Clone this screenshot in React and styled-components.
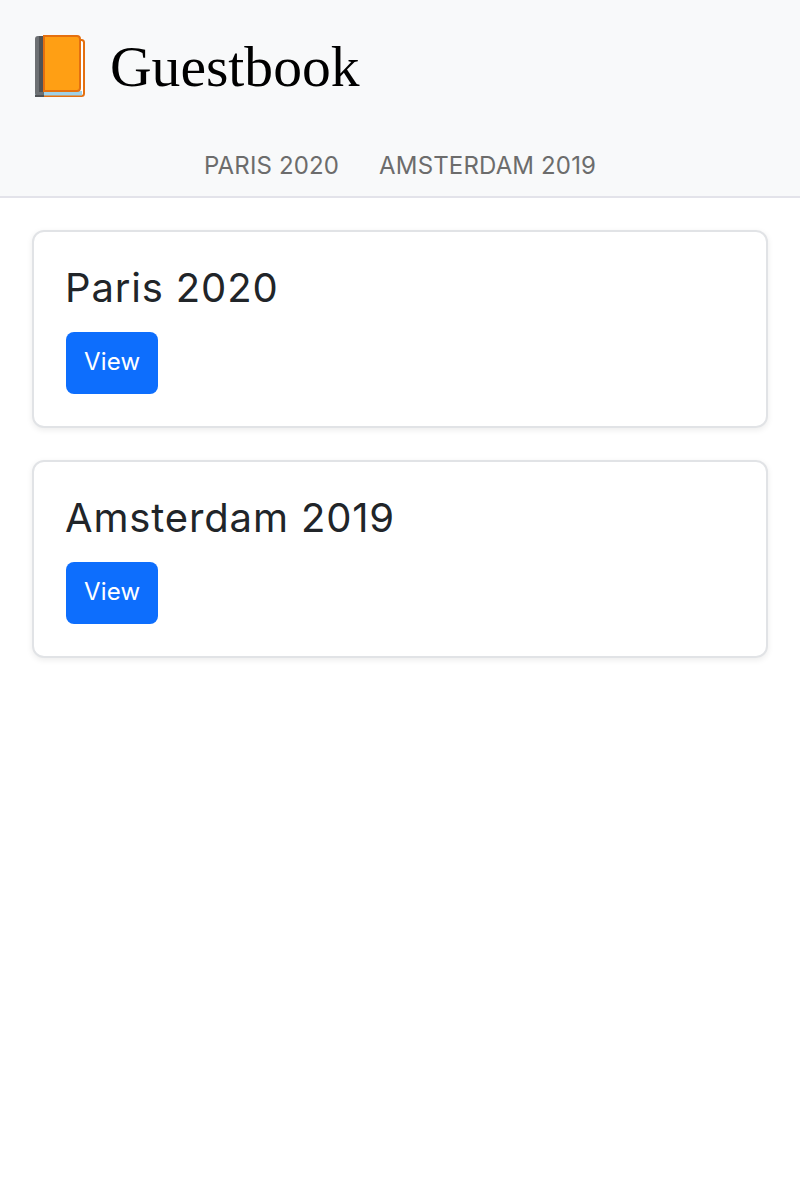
import React from 'react';
import styled, { createGlobalStyle } from 'styled-components';

const GlobalStyle = createGlobalStyle`
  body {
    margin: 0;
    background: #fff;
    font-family: Inter, "Liberation Sans", Arial, sans-serif;
  }
`;

const Header = styled.header`
  background: #f8f9fa;
  border-bottom: 2px solid #e3e3ea;
`;

const Brand = styled.div`
  display: flex;
  align-items: center;
  height: 134px;
  padding-left: 32px;
  gap: 22px;
`;

const BrandName = styled.h1`
  margin: 0;
  font-family: "Liberation Serif", "Times New Roman", serif;
  font-weight: 400;
  font-size: 57.6px;
  line-height: 1;
  color: #000;
`;

const Nav = styled.nav`
  display: flex;
  justify-content: center;
  gap: 40px;
  height: 62px;
  padding-top: 16px;
  box-sizing: border-box;
`;

const NavLink = styled.a`
  font-size: 24px;
  line-height: 32px;
  letter-spacing: 0.15px;
  color: #6c6c6c;
  text-transform: uppercase;
`;

const Main = styled.main`
  display: flex;
  flex-direction: column;
  gap: 32px;
  padding: 32px;
`;

const Card = styled.section`
  border: 2px solid #e1e3e6;
  border-radius: 12px;
  padding: 32px;
  box-shadow: 0 2px 6px rgba(0, 0, 0, 0.08);
  background: #fff;
`;

const CardTitle = styled.h2`
  margin: 0 0 20px -1px;
  font-weight: 400;
  font-size: 40px;
  line-height: 48px;
  letter-spacing: 0.85px;
  color: #212529;
`;

const ViewButton = styled.a`
  display: inline-block;
  padding: 11px 18px 13px;
  font-size: 24px;
  line-height: 38px;
  letter-spacing: 0.2px;
  color: #fff;
  background: #0d6efd;
  border-radius: 8px;
`;

const BookIcon = () => (
  <svg width="56" height="64" viewBox="0 0 56 64">
    <rect x="4" y="5" width="48" height="56" rx="2.5" fill="#fff" stroke="#e5700f" strokeWidth="2" />
    <rect x="3" y="56" width="47" height="4.5" fill="#9fd0e6" />
    <path d="M3 4a3 3 0 0 1 3-3h6v60H6a3 3 0 0 1-3-3z" fill="#6d7073" />
    <rect x="7" y="1" width="5" height="56" fill="#505356" />
    <path d="M12 1h33a3 3 0 0 1 3 3v49a3 3 0 0 1-3 3H12z" fill="#ff9f14" stroke="#e5700f" strokeWidth="2" />
    <rect x="3" y="60" width="9" height="2" fill="#505356" />
  </svg>
);

const conferences = ['Paris 2020', 'Amsterdam 2019'];

const App = () => (
  <>
    <GlobalStyle />
    <Header>
      <Brand>
        <BookIcon />
        <BrandName>Guestbook</BrandName>
      </Brand>
      <Nav>
        {conferences.map(name => <NavLink key={name}>{name}</NavLink>)}
      </Nav>
    </Header>
    <Main>
      {conferences.map(name => (
        <Card key={name}>
          <CardTitle>{name}</CardTitle>
          <ViewButton>View</ViewButton>
        </Card>
      ))}
    </Main>
  </>
);

export default App;
